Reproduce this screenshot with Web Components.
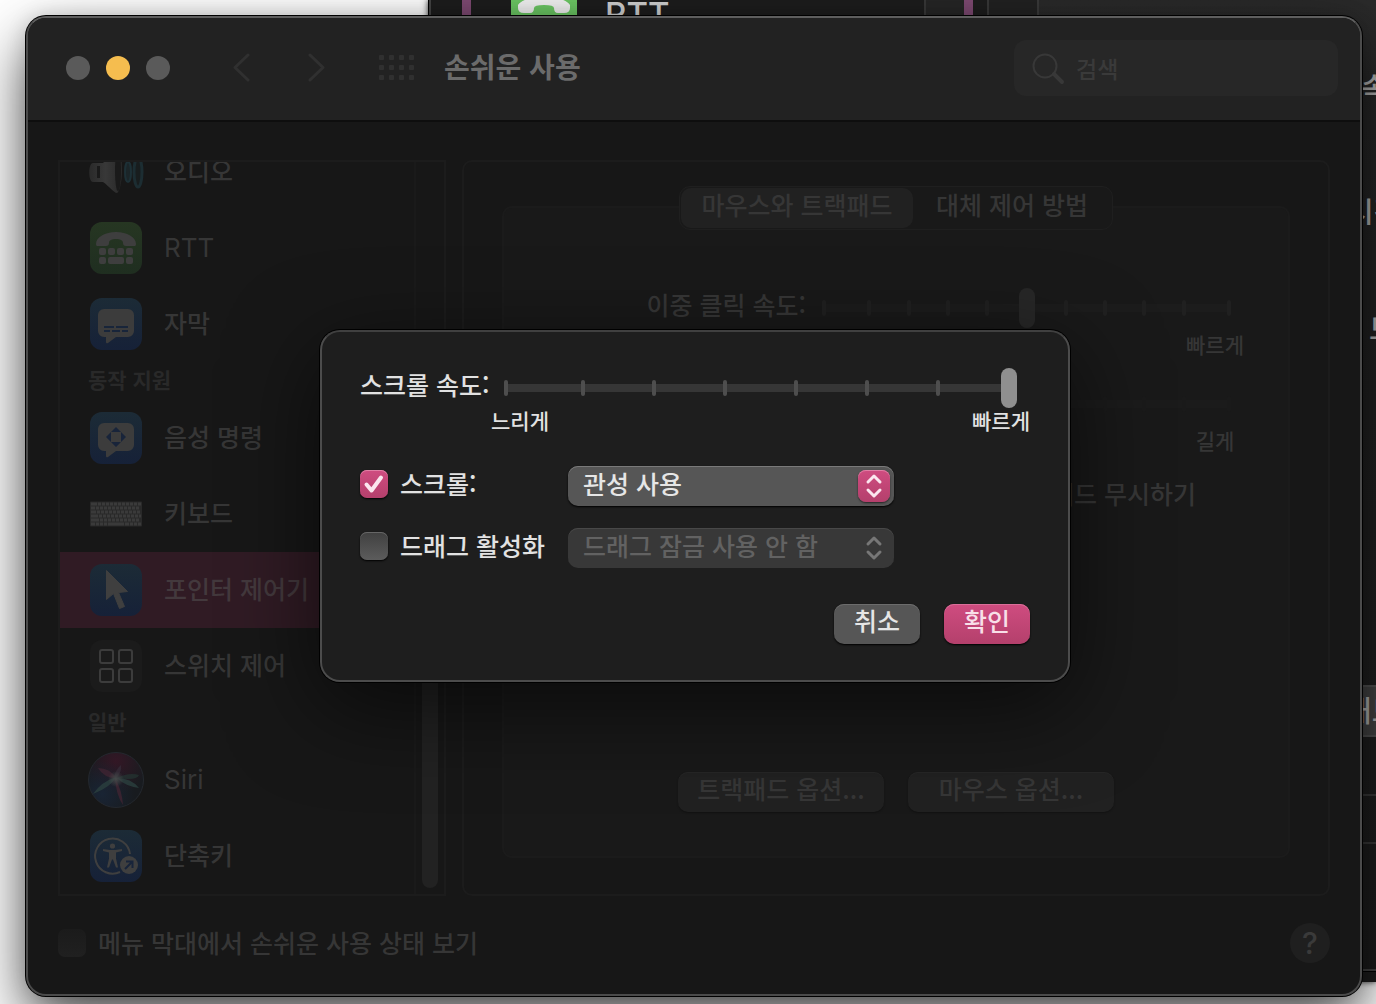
<!DOCTYPE html>
<html lang="ko">
<head>
<meta charset="utf-8">
<title>손쉬운 사용</title>
<style>
  html, body { height: 100%; }
  body {
    margin: 0;
    background: #fff;
    overflow: hidden;
    font-family: "Noto Sans CJK KR", sans-serif;
    font-size: 25px;
    font-weight: 500;
    line-height: 32px;
    --pink-hi: #cf4c80;
    --pink-lo: #b4406c;
    --dim: #363636;
    --line: #1c1c1c;
  }
</style>
</head>
<body>
<desktop-area>
  <back-window></back-window>
  <pref-window>
    <tool-bar slot="toolbar" heading="손쉬운 사용"></tool-bar>
    <side-list slot="side">
      <side-item icon="audio">오디오</side-item>
      <side-item icon="rtt" latin>RTT</side-item>
      <side-item icon="caption">자막</side-item>
      <side-heading>동작 지원</side-heading>
      <side-item icon="voice">음성 명령</side-item>
      <side-item icon="keyboard">키보드</side-item>
      <side-item icon="pointer" selected>포인터 제어기</side-item>
      <side-item icon="switch">스위치 제어</side-item>
      <side-heading>일반</side-heading>
      <side-item icon="siri" latin>Siri</side-item>
      <side-item icon="shortcut">단축키</side-item>
    </side-list>
    <pointer-panel slot="panel"></pointer-panel>
    <status-bar slot="footer"></status-bar>
    <option-sheet slot="sheet"></option-sheet>
  </pref-window>
</desktop-area>

<script>
const define = (name, render) => customElements.define(name, class extends HTMLElement {
  connectedCallback() {
    if (this.shadowRoot) return;
    const t = document.createElement('template');
    t.innerHTML = '<style>:host,*{box-sizing:border-box}button,input,select{font:inherit;color:inherit;margin:0}</style>' + render(this);
    this.attachShadow({ mode: 'open' }).append(t.content.cloneNode(true));
  }
});

/* ---------- icons, drawn on a 52 x 52 grid ---------- */
const blue = `<defs><linearGradient id="b" x2="0" y2="1"><stop stop-color="#1c2b36"/><stop offset="1" stop-color="#162138"/></linearGradient></defs><rect width="52" height="52" rx="12" fill="url(#b)"/>`;
const bubble = `<path fill="#3c3c3c" d="M14 11h24a6 6 0 0 1 6 6v16a6 6 0 0 1-6 6H26l-8 6q-2 1-2-1v-5h-2a6 6 0 0 1-6-6V17a6 6 0 0 1 6-6z"/>`;
const handset = `M6 22c0-7 9-12 20-12s20 5 20 12c0 2-1 2-2 2h-8c-2 0-3-1-3-3 0-3-3-4-7-4s-7 1-7 4c0 2-1 3-3 3H8c-1 0-2 0-2-2z`;
const keyRows = () => {
  let s = '';
  const first = [6, 4, 5, 7, 8];
  first.forEach((w, r) => {
    const y = 14.5 + r * 4;
    s += `<rect x="1" y="${y}" width="${w}" height="3"/>`;
    for (let x = w + 2; x < 50; x += 4) s += `<rect x="${x}" y="${y}" width="${Math.min(3, 51 - x)}" height="3"/>`;
  });
  return s + '<path d="M1 34.5h4v3H1zM6 34.5h3v3H6zM10 34.5h3v3h-3zM14 34.5h3v3h-3zM18 34.5h16v3H18zM35 34.5h4v3h-4zM40 34.5h3v3h-3zM44 34.5h3v3h-3zM48 34.5h3v3h-3z"/>';
};
const icons = {
  audio: `<defs><linearGradient id="m"><stop stop-color="#2a2a2a"/><stop offset=".5" stop-color="#383838"/><stop offset="1" stop-color="#282828"/></linearGradient></defs>
    <path fill="url(#m)" d="M3 17h10L28 2c3 0 4 12 4 23s-3 22-5 22c-3 0-8-7-14-11H3c-5 0-5-19 0-19z"/>
    <path fill="#1a1a1a" d="M7 20h3v12H7z"/><ellipse cx="28" cy="25" rx="3" ry="20" fill="#1a1a1a"/>
    <ellipse cx="38" cy="26" rx="3" ry="10" fill="#1b2528" stroke="#1d3036" stroke-width="2"/>
    <ellipse cx="48" cy="26" rx="4" ry="15" fill="#181d1e" stroke="#1c2d32" stroke-width="3"/>`,
  rtt: `<defs><linearGradient id="g" x2="0" y2="1"><stop stop-color="#263622"/><stop offset="1" stop-color="#1f2e20"/></linearGradient></defs>
    <rect width="52" height="52" rx="12" fill="url(#g)"/><g fill="#3e3e3e"><path d="${handset}"/>
    <rect x="9" y="26" width="7" height="7" rx="2"/><rect x="18" y="26" width="7" height="7" rx="2"/><rect x="27" y="26" width="7" height="7" rx="2"/><rect x="36" y="26" width="7" height="7" rx="2"/>
    <rect x="9" y="35" width="7" height="7" rx="2"/><rect x="18" y="35" width="16" height="7" rx="2"/><rect x="36" y="35" width="7" height="7" rx="2"/></g>`,
  caption: blue + bubble + `<path stroke="#18253a" stroke-width="2" d="M14 29h10m2 0h12M14 33h6m2 0h8m2 0h6"/>`,
  voice: blue + bubble + `<path fill="#18243a" d="M26 15l5 5H21zM26 35l5-5H21zM16 25l5-5v10zM36 25l-5-5v10z"/>`,
  keyboard: `<rect y="13.500" width="52" height="25" rx="1" fill="#292929"/><g fill="#3a3a3a">${keyRows()}</g>`,
  pointer: blue + `<path fill="#3f3f3f" stroke="#3f3f3f" stroke-linejoin="round" d="M16.500 6.500v29l7-6 6 15 5-2-6-14 9-1z"/>`,
  switch: `<rect width="52" height="52" rx="12" fill="#1b1b1b"/><g fill="none" stroke="#3c3c3c" stroke-width="2"><rect x="10" y="10" width="13" height="13" rx="2"/><rect x="29" y="10" width="13" height="13" rx="2"/><rect x="10" y="29" width="13" height="13" rx="2"/><rect x="29" y="29" width="13" height="13" rx="2"/></g>`,
  siri: `<defs><radialGradient id="s1" cx=".5" cy=".15" r=".6"><stop stop-color="#331725"/><stop offset="1" stop-color="#331725" stop-opacity="0"/></radialGradient>
    <radialGradient id="s2" cx=".25" cy=".75" r=".6"><stop stop-color="#192434"/><stop offset="1" stop-color="#192434" stop-opacity="0"/></radialGradient>
    <radialGradient id="s3"><stop stop-color="#454a4a"/><stop offset="1" stop-color="#454a4a" stop-opacity="0"/></radialGradient></defs>
    <circle cx="26" cy="26" r="27.500" fill="#181b1f"/><circle cx="26" cy="26" r="27.500" fill="url(#s1)"/><circle cx="26" cy="26" r="27.500" fill="url(#s2)"/>
    <circle cx="26" cy="26" r="27.500" fill="none" stroke="#24282e"/>
    <path fill="#2b403f" opacity=".8" d="M26 23q-5 10-23 17q8-12 23-17zM27 24q14 0 22 10q-14-2-22-10z"/>
    <path fill="#243a35" opacity=".6" d="M27 24q12-6 22-3q-2 6-22 3z"/>
    <path fill="#3c2331" opacity=".9" d="M25 24q7 12 8 27q-7-10-8-27zM8 14q12 0 18 10q-12 0-18-10z"/>
    <path fill="#352a37" opacity=".8" d="M24 23q2-8 7-12q1 8-5 13z"/><circle cx="26" cy="25" r="8" fill="url(#s3)"/>`,
  shortcut: blue + `<g fill="none" stroke="#3f3f3f" stroke-width="2"><path d="M40 24a17.500 17.500 0 1 0-10 18"/></g>
    <g fill="#3f3f3f"><circle cx="22.500" cy="16" r="2.600"/><path d="M13 19l7 1h5l7-1v2l-6 1.500v6l2 9h-2l-3-8h-1l-3 8h-2l2-9v-6L13 21z"/><circle cx="39" cy="35" r="9"/></g>
    <path fill="none" stroke="#18243a" stroke-width="2" d="M35 39l7-7M36 31.500h6.500V38"/>`
};
const svg = name => `<svg viewBox="0 0 52 52" width="52" height="52" overflow="visible" aria-hidden="true">${icons[name]}</svg>`;

/* ---------- desktop ---------- */
define('desktop-area', () => `<style>
  :host{display:block;position:relative;height:100vh;overflow:hidden;background:#fff}
</style><slot></slot>`);

define('back-window', () => `<style>
  :host{position:absolute;top:0;left:428px;right:0;bottom:22px;background:linear-gradient(#2a2a2a,#232323 30%,#1d1d1d);overflow:hidden;
    border-left:1px solid #000;box-shadow:0 0 6px rgba(0,0,0,.8);display:flex;color:#b4b4b4}
  .side{width:560px;height:16px;flex:none;display:flex;background:#1d1d1d;border-left:2px solid #444;border-right:2px solid #383838}
  .rail{width:9px;background:#7e4a72;margin-left:31px}
  .phone{margin-left:40px;width:66px;overflow:hidden;background:#6cc864;display:block}
  .rtt{margin-left:28px;width:319px;height:16px;font:500 33px/40px Inter,sans-serif;color:#d0d0d0}
  .rtt span{display:block;margin-top:-6px}
  .track{width:40px;background:#262626;border-left:2px solid #383838}
  .track+.rail{margin:0}
  .gutter{width:50px;height:16px;background:#222;border-right:2px solid #3a3a3a;margin-right:auto}
  .edge{width:15px;flex:none;display:flex;flex-direction:column;white-space:nowrap;font-size:29px;line-height:40px}
  .edge>*{flex:none}
  .a{margin-top:66px}.b{margin-top:84px;text-indent:-14px}.c{margin-top:77px;text-indent:8px}
  .d{margin-top:338px;height:52px;line-height:44px;background:#454545;border-block:2px solid #535353;text-indent:-16px}
  .l{height:2px;background:#3a3a3a;margin-top:57px}.m{margin-top:46px}.n{margin-top:125px;height:3px;background:#444;border-bottom:1px solid #000}
</style>
<div class="side"><div class="rail"></div>
<svg class="phone" viewBox="0 0 66 16" height="16"><path fill="#f2f2f2" d="M7 5C14-6 52-6 59 5v3q0 5-6 5h-6q-4 0-4-5 0-3-10-3t-10 3q0 5-4 5h-6q-6 0-6-5z"/></svg>
<div class="rtt"><span>RTT</span></div><div class="track"></div><div class="rail"></div></div>
<div class="gutter"></div>
<div class="edge"><div class="a">속도</div><div class="b">시간</div><div class="c">드래그</div><div class="d">패드</div><div class="l"></div><div class="l m"></div><div class="l n"></div></div>`);

define('pref-window', () => `<style>
  :host{position:absolute;inset:16px 14px 8px 26px;display:flex;flex-direction:column;background:#171717;border:2px solid #4b4b4b;border-top-color:#5e5e5e;
    border-radius:20px;box-shadow:0 0 0 1px #000,0 26px 60px rgba(0,0,0,.7),0 0 20px rgba(0,0,0,.15);color:var(--dim)}
  .body{flex:1;min-height:0;display:flex;gap:16px;padding:38px 30px 0}
  slot[name=panel]::slotted(*){flex:1}
</style>
<slot name="toolbar"></slot>
<div class="body"><slot name="side"></slot><slot name="panel"></slot></div>
<slot name="footer"></slot><slot name="sheet"></slot>`);

define('tool-bar', el => `<style>
  :host{display:flex;align-items:center;height:104px;flex:none;background:#222;border-bottom:2px solid #0e0e0e;border-radius:18px 18px 0 0;padding:0 22px 2px 38px}
  button{appearance:none;border:0;padding:0;background:none;display:block}
  .lights{display:flex;gap:16px}
  .lights button{width:24px;height:24px;border-radius:50%;background:#5a5a5a}
  .lights .min{background:#f5bd4f}
  .nav{display:flex;gap:44px;margin-left:56px}
  svg{display:block;fill:none;stroke:#303030;stroke-width:3;stroke-linecap:round;stroke-linejoin:round}
  .all{margin-left:48px}.all svg{fill:#303030;stroke:none}
  h1{margin:0 0 0 30px;padding-bottom:4px;flex:1;font-size:28px;line-height:36px;font-weight:700;color:#6b6b6b}
  label{display:flex;align-items:center;gap:11px;width:324px;height:56px;border-radius:12px;background:#272727;padding-left:18px}
  label svg{stroke:#383838}
  input{appearance:none;border:0;background:none;outline:0;flex:1;min-width:0;padding:0;font-size:23px;line-height:32px}
  input::placeholder{color:#3a3a3a;opacity:1}
</style>
<div class="lights"><button aria-label="닫기"></button><button class="min" aria-label="최소화"></button><button aria-label="확대"></button></div>
<div class="nav"><button aria-label="뒤로"><svg width="30" height="30"><path d="M22 2 9 14.500 22 27"/></svg></button>
<button aria-label="앞으로"><svg width="30" height="30"><path d="M10 2l13 12.500L10 27"/></svg></button></div>
<button class="all" aria-label="모두 보기"><svg width="36" height="26">${[0, 10, 20].map(y => [1, 11, 21, 31].map(x => `<rect x="${x}" y="${y}" width="5" height="5" rx="1"/>`).join('')).join('')}</svg></button>
<h1>${el.getAttribute('heading')}</h1>
<label><svg width="33" height="33"><circle cx="13" cy="14" r="11.500" stroke-width="2"/><path d="M22 22l8 8" stroke-width="4"/></svg><input type="search" placeholder="검색" aria-label="검색"></label>`);

/* ---------- sidebar ---------- */
define('side-list', () => `<style>
  :host{display:flex;width:388px;flex:none;border:2px solid var(--line);overflow:hidden}
  nav{flex:1;min-width:0;display:flex;flex-direction:column;justify-content:flex-end}
  .bar{width:30px;border-left:2px solid #1a1a1a;padding:6px;display:flex;align-items:flex-end}
  .thumb{width:16px;height:280px;border-radius:8px;background:#222}
</style><nav><slot></slot></nav><div class="bar"><div class="thumb"></div></div>`);

define('side-item', el => `<style>
  :host{display:block;flex:none}
  :host([selected]) button{background:#301b24;color:#43393d}
  button{appearance:none;border:0;background:none;width:100%;height:76px;padding:0 0 0 30px;display:flex;align-items:center;gap:22px;white-space:nowrap;text-align:left}
  svg{flex:none}
  span{padding-bottom:4px}
  :host([latin]) span{font-family:Inter,sans-serif;font-size:26px;font-weight:400;padding:0}
</style><button>${svg(el.getAttribute('icon'))}<span><slot></slot></span></button>`);

define('side-heading', () => `<style>
  :host{display:block;flex:none;height:38px;padding-left:28px;font-size:21px;line-height:34px;font-weight:700;color:#292929}
</style><slot></slot>`);

/* ---------- shared controls ---------- */
define('push-button', el => `<style>
  :host{display:block}
  button{appearance:none;border:0;display:block;width:100%;height:40px;padding:0 0 8px;border-radius:10px;background:#212121;
    box-shadow:inset 0 1px #262626,0 1px 2px rgba(0,0,0,.3)}
  :host([kind=plain]) button{background:#565656;color:#e6e6e6;box-shadow:inset 0 1px #6c6c6c,0 1px 2px #000}
  :host([kind=default]) button{background:linear-gradient(var(--pink-hi),var(--pink-lo));color:#f8dfe8;box-shadow:inset 0 1px #da6f99,0 1px 2px #000}
</style><button><slot></slot></button>`);

define('tick-box', el => `<style>
  :host{display:block}
  label{display:flex;align-items:center;gap:12px;height:36px;white-space:nowrap}
  .box{display:grid;width:28px;height:28px;flex:none}
  .box>*{grid-area:1/1}
  input{appearance:none;width:28px;height:28px;border-radius:7px;background:linear-gradient(#1b1b1b,#202020)}
  :host([bright]) input{background:linear-gradient(#404040,#5c5c5c);box-shadow:inset 0 1px #666,0 1px 2px #000}
  :host([bright]) input:checked{background:linear-gradient(var(--pink-hi),var(--pink-lo));box-shadow:inset 0 1px #e07fa5,0 1px 2px #000}
  svg{pointer-events:none;fill:none;stroke:#fbe6ee;stroke-width:4;stroke-linecap:round;stroke-linejoin:round;visibility:hidden}
  input:checked+svg{visibility:visible}
  .text{padding-bottom:2px}
</style><label><span class="box"><input type="checkbox" ${el.hasAttribute('checked') ? 'checked' : ''}><svg width="28" height="28"><path d="M6.500 14.500l5 6L21 7.500"/></svg></span><span class="text"><slot></slot></span></label>`);

define('tick-slider', el => {
  const n = +el.getAttribute('steps');
  let ticks = '';
  for (let i = 0; i < n; i++) ticks += `<i style="grid-column:${i === n - 1 ? n + 1 : i + 1}"></i>`;
  return `<style>
  :host{display:grid;grid-template-columns:var(--label,1fr) var(--field,1fr)}
  label{height:32px;text-align:var(--label-align,left);white-space:nowrap;padding-right:var(--label-gap,0)}
  .rail{display:grid;margin:0 13px;height:40px;align-items:center}
  .rail>*{grid-area:1/1;min-width:0}
  .line{height:8px;border-radius:2px;background:var(--rail,#1c1c1c)}
  .ticks{display:grid;grid-template-columns:8px repeat(${n - 1},1fr) 8px}
  i{width:4px;height:16px;border-radius:2px;background:var(--tick,#202020);justify-self:end;margin-right:-2px;grid-row:1}
  i:first-child{justify-self:start;margin:0}i:last-child{margin:0}
  input{appearance:none;background:none;width:100%;height:40px}
  input::-webkit-slider-thumb{appearance:none;width:16px;height:40px;border-radius:8px;background:var(--thumb,#272727)}
  .caps{display:flex;justify-content:space-between;font-size:21px;line-height:24px;padding-top:var(--cap-gap,0);padding-bottom:2px}
  .caps span{width:58px;text-align:center;white-space:nowrap}
</style><label for="r">${el.getAttribute('label') || ''}</label>
<div><div class="rail"><div class="line"></div><div class="ticks">${ticks}</div><input id="r" type="range" min="0" max="${n - 1}" value="${el.getAttribute('value')}" aria-label="${el.getAttribute('label') || el.getAttribute('high')}"></div>
<div class="caps"><span>${el.getAttribute('low') || ''}</span><span>${el.getAttribute('high')}</span></div></div>`;
});

define('pop-up', el => `<style>
  :host{display:grid;width:326px;height:40px}
  select,svg{grid-area:1/1}
  select{appearance:none;border:0;width:100%;height:40px;border-radius:10px;background:#565656;color:#e6e6e6;padding:0 44px 6px 15px;box-shadow:inset 0 1px #7a7a7a,0 1px 2px #000;opacity:1}
  select:disabled{background:#383838;color:#626262;box-shadow:inset 0 1px #484848}
  svg{justify-self:end;margin:4px;border-radius:8px;background:linear-gradient(var(--pink-hi),var(--pink-lo));box-shadow:inset 0 1px #e07fa5,0 1px 2px rgba(0,0,0,.6);
    fill:none;stroke:#fbe6ee;stroke-width:3;stroke-linecap:round;stroke-linejoin:round;pointer-events:none}
  select:disabled+svg{background:none;box-shadow:none;stroke:#777}
</style><select aria-label="${el.getAttribute('label')}" ${el.hasAttribute('disabled') ? 'disabled' : ''}><option>${el.getAttribute('value')}</option></select>
<svg width="32" height="32"><path d="M10 12l6-6 6 6M10 20l6 6 6-6"/></svg>`);

/* ---------- right panel ---------- */
define('pointer-panel', () => `<style>
  :host{display:flex;flex-direction:column;border:2px solid var(--line);border-radius:10px;padding:24px 38px 36px;min-width:0}
  .seg{align-self:center;position:relative;display:flex;width:434px;height:44px;margin-bottom:-24px;flex:none;border:1px solid #1f1f1f;border-radius:11px;background:#191919;padding:1px}
  .seg button{appearance:none;border:0;padding:0 0 8px;background:none;flex:1;border-radius:10px;white-space:nowrap}
  .seg .on{flex:0 0 232px;background:#212121}
  .group{flex:1;min-height:0;border:2px solid #1b1b1b;border-radius:10px;background:#191919;display:flex;flex-direction:column;padding:80px 44px 44px}
  tick-slider{--field:435px;--label-align:right;--label-gap:3px;--cap-gap:4px;margin-bottom:26px}
  .off{--rail:#1b1b1b;--tick:#1a1a1a;--thumb:#1f1f1f;margin-bottom:22px}
  .ignore{align-self:flex-end;margin-right:48px}
  .row{display:flex;justify-content:center;gap:24px;margin-top:auto}
  push-button{width:206px}
</style>
<div class="seg" role="tablist"><button class="on" role="tab" aria-selected="true">마우스와 트랙패드</button><button role="tab" aria-selected="false">대체 제어 방법</button></div>
<div class="group">
<tick-slider label="이중 클릭 속도:" steps="11" value="5" high="빠르게"></tick-slider>
<tick-slider class="off" steps="11" value="2" high="길게"></tick-slider>
<tick-box class="ignore">내장 트랙패드 무시하기</tick-box>
<div class="row"><push-button>트랙패드 옵션...</push-button><push-button>마우스 옵션...</push-button></div>
</div>`);

define('status-bar', () => `<style>
  :host{display:flex;align-items:center;justify-content:space-between;height:98px;flex:none;padding:0 30px 4px}
  .help{appearance:none;border:0;padding:0;width:40px;height:40px;border-radius:50%;background:#1f1f1f;font:500 30px/40px Inter,sans-serif;color:#3a3a3a}
</style><tick-box>메뉴 막대에서 손쉬운 사용 상태 보기</tick-box><button class="help" aria-label="도움말">?</button>`);

/* ---------- option sheet ---------- */
define('option-sheet', () => `<style>
  :host{position:absolute;top:312px;left:292px;right:290px;display:block;padding:36px 38px;border:2px solid #4c4c4c;border-top-color:#404040;border-radius:20px;background:#1e1e1e;color:#e2e2e2;
    box-shadow:0 0 0 1px #000,0 24px 90px rgba(0,0,0,.6)}
  tick-slider{--label:131px;--rail:#363636;--tick:#4e4e4e;--thumb:#8f8f8f;margin-bottom:32px}
  .row{display:grid;grid-template-columns:208px auto;justify-content:start;align-items:start;margin-bottom:22px}
  .actions{display:flex;justify-content:flex-end;gap:24px;margin-top:36px}
  push-button{width:86px}
</style>
<tick-slider label="스크롤 속도:" steps="8" value="7" low="느리게" high="빠르게"></tick-slider>
<div class="row"><tick-box bright checked>스크롤:</tick-box><pop-up label="스크롤" value="관성 사용"></pop-up></div>
<div class="row"><tick-box bright>드래그 활성화</tick-box><pop-up label="드래그 활성화" value="드래그 잠금 사용 안 함" disabled></pop-up></div>
<div class="actions"><push-button kind="plain">취소</push-button><push-button kind="default">확인</push-button></div>`);
</script>
</body>
</html>
